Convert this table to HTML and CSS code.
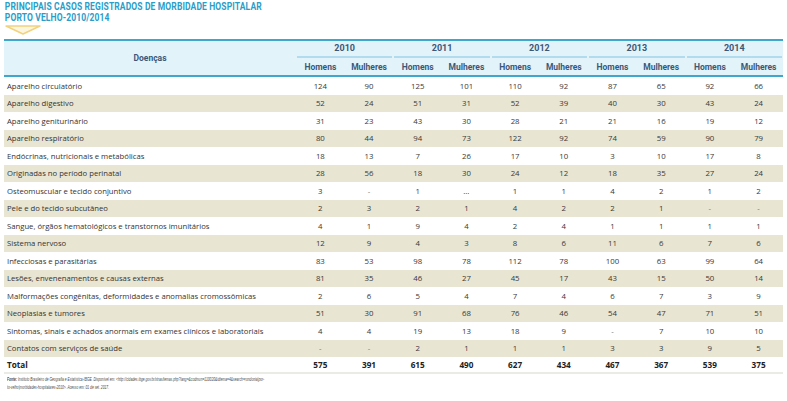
FILE: index.html
```html
<!DOCTYPE html>
<html lang="pt-BR">
<head>
<meta charset="utf-8">
<title>Morbidade Hospitalar - Porto Velho</title>
<link rel="stylesheet" href="styles.css">
</head>
<body>
<div class="page">
  <header class="title">
    <h1><span>PRINCIPAIS CASOS REGISTRADOS DE MORBIDADE HOSPITALAR</span><br><span>PORTO VELHO-2010/2014</span></h1>
    <svg class="marker" width="36" height="10" viewBox="0 0 36 10"><polygon points="1,1 35,1 18,9" fill="#fdf6df" stroke="#f1d27e" stroke-width="1.4" stroke-linejoin="round"/></svg>
  </header>
  <table class="data">
    <colgroup>
      <col class="c-name"><col><col><col><col><col><col><col><col><col><col>
    </colgroup>
    <thead>
      <tr class="h-years">
        <th rowspan="2" class="h-name">Doenças</th>
        <th colspan="2"><div class="yr">2010</div></th>
        <th colspan="2"><div class="yr">2011</div></th>
        <th colspan="2"><div class="yr">2012</div></th>
        <th colspan="2"><div class="yr">2013</div></th>
        <th colspan="2"><div class="yr">2014</div></th>
      </tr>
      <tr class="h-sex">
        <th>Homens</th><th>Mulheres</th>
        <th>Homens</th><th>Mulheres</th>
        <th>Homens</th><th>Mulheres</th>
        <th>Homens</th><th>Mulheres</th>
        <th>Homens</th><th>Mulheres</th>
      </tr>
    </thead>
    <tbody>
      <tr><td>Aparelho circulatório</td><td>124</td><td>90</td><td>125</td><td>101</td><td>110</td><td>92</td><td>87</td><td>65</td><td>92</td><td>66</td></tr>
      <tr><td>Aparelho digestivo</td><td>52</td><td>24</td><td>51</td><td>31</td><td>52</td><td>39</td><td>40</td><td>30</td><td>43</td><td>24</td></tr>
      <tr><td>Aparelho geniturinário</td><td>31</td><td>23</td><td>43</td><td>30</td><td>28</td><td>21</td><td>21</td><td>16</td><td>19</td><td>12</td></tr>
      <tr><td>Aparelho respiratório</td><td>80</td><td>44</td><td>94</td><td>73</td><td>122</td><td>92</td><td>74</td><td>59</td><td>90</td><td>79</td></tr>
      <tr><td>Endócrinas, nutricionais e metabólicas</td><td>18</td><td>13</td><td>7</td><td>26</td><td>17</td><td>10</td><td>3</td><td>10</td><td>17</td><td>8</td></tr>
      <tr><td>Originadas no período perinatal</td><td>28</td><td>56</td><td>18</td><td>30</td><td>24</td><td>12</td><td>18</td><td>35</td><td>27</td><td>24</td></tr>
      <tr><td>Osteomuscular e tecido conjuntivo</td><td>3</td><td class="dash">-</td><td>1</td><td>…</td><td>1</td><td>1</td><td>4</td><td>2</td><td>1</td><td>2</td></tr>
      <tr><td>Pele e do tecido subcutâneo</td><td>2</td><td>3</td><td>2</td><td>1</td><td>4</td><td>2</td><td>2</td><td>1</td><td class="dash">-</td><td class="dash">-</td></tr>
      <tr><td>Sangue, órgãos hematológicos e transtornos imunitários</td><td>4</td><td>1</td><td>9</td><td>4</td><td>2</td><td>4</td><td>1</td><td>1</td><td>1</td><td>1</td></tr>
      <tr><td>Sistema nervoso</td><td>12</td><td>9</td><td>4</td><td>3</td><td>8</td><td>6</td><td>11</td><td>6</td><td>7</td><td>6</td></tr>
      <tr><td>Infecciosas e parasitárias</td><td>83</td><td>53</td><td>98</td><td>78</td><td>112</td><td>78</td><td>100</td><td>63</td><td>99</td><td>64</td></tr>
      <tr><td>Lesões, envenenamentos e causas externas</td><td>81</td><td>35</td><td>46</td><td>27</td><td>45</td><td>17</td><td>43</td><td>15</td><td>50</td><td>14</td></tr>
      <tr><td>Malformações congênitas, deformidades e anomalias cromossômicas</td><td>2</td><td>6</td><td>5</td><td>4</td><td>7</td><td>4</td><td>6</td><td>7</td><td>3</td><td>9</td></tr>
      <tr><td>Neoplasias e tumores</td><td>51</td><td>30</td><td>91</td><td>68</td><td>76</td><td>46</td><td>54</td><td>47</td><td>71</td><td>51</td></tr>
      <tr><td>Sintomas, sinais e achados anormais em exames clínicos e laboratoriais</td><td>4</td><td>4</td><td>19</td><td>13</td><td>18</td><td>9</td><td class="dash">-</td><td>7</td><td>10</td><td>10</td></tr>
      <tr><td>Contatos com serviços de saúde</td><td class="dash">-</td><td class="dash">-</td><td>2</td><td>1</td><td>1</td><td>1</td><td>3</td><td>3</td><td>9</td><td>5</td></tr>
    </tbody>
    <tfoot>
      <tr class="total"><td>Total</td><td>575</td><td>391</td><td>615</td><td>490</td><td>627</td><td>434</td><td>467</td><td>367</td><td>539</td><td>375</td></tr>
    </tfoot>
  </table>
  <p class="source"><b>Fonte:</b> Instituto Brasileiro de Geografia e Estatística-IBGE. Disponível em: &lt;http://cidades.ibge.gov.br/xtras/temas.php?lang=&amp;codmun=110020&amp;idtema=4&amp;search=rondonia|por-<br>to-velho|morbidades-hospitalares-2010&gt;. Acesso em: 01 de set. 2017.</p>
</div>
</body>
</html>
```
FILE: styles.css
```css
html, body {
  margin: 0;
  padding: 0;
  background: #ffffff;
}

.page {
  padding: 0 4px;
  font-family: "Open Sans", "Noto Sans", sans-serif;
}

.title h1 {
  margin: 0;
  padding: 1px 0 0 1px;
  font-family: "Roboto", "Liberation Sans", sans-serif;
  font-weight: 700;
  font-size: 10px;
  line-height: 11px;
  color: #2a9dc8;
  letter-spacing: 0.15px;
  white-space: nowrap;
  transform: scaleX(0.85);
  transform-origin: left top;
}

.marker {
  display: block;
  margin: 2px 0 0 1px;
}

.data {
  margin-top: 4px;
  width: 779px;
  border-collapse: collapse;
  table-layout: fixed;
}

.c-name {
  width: 292px;
}

.data thead th {
  background: #e3f3fa;
  color: #3a5878;
  font-family: "Roboto", "Liberation Sans", sans-serif;
  font-weight: 700;
  font-size: 8.5px;
  padding: 0;
  text-align: center;
}

.h-years th {
  border-top: 2px solid #3fa6cc;
  height: 17px;
  vertical-align: bottom;
}

.h-name {
  border-bottom: 2px solid #3fa6cc;
  vertical-align: middle !important;
}

.yr {
  margin: 0 1px;
  padding-bottom: 3px;
  border-bottom: 2px solid #b2dcee;
  font-size: 9px;
}

.h-sex th {
  height: 17px;
  border-bottom: 2px solid #3fa6cc;
}

.data td {
  padding: 0;
  height: 17.5px;
  text-align: center;
  font-size: 7.8px;
  color: #383838;
  white-space: nowrap;
}

.data td:first-child {
  text-align: left;
  padding-left: 3px;
  font-size: 7.7px;
  color: #333;
}

.data tbody tr:nth-child(even) td {
  background: #e8e5d2;
}

.data td.dash {
  color: #777;
}

.total td {
  height: 15px;
  font-weight: 700;
  font-size: 8.2px;
  color: #222;
  border-bottom: 2px solid #ebebe6;
}

.total td:first-child {
  font-size: 8.2px;
  color: #222;
}

.source {
  margin: 2px 0 0 3px;
  font-size: 4.7px;
  line-height: 8px;
  font-style: italic;
  color: #4a4a4a;
  font-family: "Liberation Sans", sans-serif;
  white-space: nowrap;
  transform: scaleX(0.7);
  transform-origin: left top;
}
```
